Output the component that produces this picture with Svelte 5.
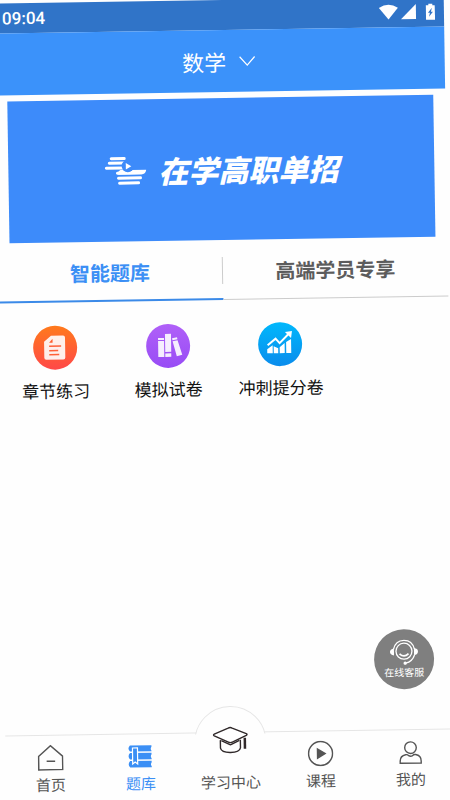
<script>
	let tab = $state(0)
	let page = $state("bank")

	const tabs = ["智能题库", "高端学员专享"]

	const items = [
		{ id: "chapter", name: "章节练习" },
		{ id: "mock", name: "模拟试卷" },
		{ id: "sprint", name: "冲刺提分卷" }
	]

	const nav = [
		{ id: "home", name: "首页" },
		{ id: "bank", name: "题库" },
		{ id: "study", name: "学习中心" },
		{ id: "course", name: "课程" },
		{ id: "mine", name: "我的" }
	]
</script>

<div class="phone">
	<div class="status">
		<span>09:04</span>
		<svg width="56" height="18" viewBox="0 0 56 18" fill="#fff">
			<path d="M0 4.500Q9.500-2 19 4.500L9.500 16z" />
			<path d="M37 1v15H22z" />
			<path d="M47 2.500h2.500V1h4v1.500H56V17h-9z" />
			<path d="M53 5l-4 5h2l-1 4 4-5h-2z" fill="#3074c8" />
		</svg>
	</div>

	<header>
		<button class="subject">
			数学
			<svg width="17" height="11" viewBox="0 0 17 11"><path d="M1 1l7.500 8.500L16 1" fill="none" stroke="#fff" stroke-width="1.200" /></svg>
		</button>
	</header>

	<main>
		<a class="banner" href="#banner">
			<svg width="42" height="29" viewBox="0 0 42 29" fill="none" stroke="#fff" stroke-width="3" stroke-linecap="round">
				<path d="M7 2h13M5 6.500h15M2 11.500h18" />
				<path d="M13 16.500h24M14 21.500h22M15 26.500h19" />
				<path d="M27 13.500h15q-1 4-4 4.500H14q-2-2 2-4.500z" fill="#fff" stroke="none" />
				<circle cx="23.500" cy="9.500" r="6.200" fill="#3d8bfa" stroke="none" />
				<path d="M21.500 6.500v6.500l5.500-3.200z" fill="#fff" stroke="none" />
			</svg>
			<strong>在学高职单招</strong>
		</a>

		<div class="tabs">
			{#each tabs as name, i}
				<button class:active={tab === i} onclick={() => (tab = i)}><span>{name}</span></button>
			{/each}
		</div>

		<div class="grid">
			{#each items as item}
				<a href="#{item.id}">
					<i class={item.id}>
						{#if item.id === "chapter"}
							<svg width="44" height="44" viewBox="0 0 44 44">
								<path d="M18 10h12q2 0 2 2v20q0 2-2 2H13q-2 0-2-2V16z" fill="#fff" opacity=".9" />
								<path d="M16 17h3.500v-4z" fill="#ff6130" />
								<path d="M16 20.500h12M16 25h9M16 29h10" stroke="#ff6038" stroke-width="1.500" />
							</svg>
						{:else if item.id === "mock"}
							<svg width="44" height="44" viewBox="0 0 44 44" fill="#fff" opacity=".9">
								<path d="M12 14h6v2h-6zM12 17h6v16h-6zM19 10h6v18h-6zM19 29.500h6V33h-6zM26 14.500l5-1 .4 2-5 1zM26.500 17.500l5-1L36 31l-5.500 1.500z" />
							</svg>
						{:else}
							<svg width="44" height="44" viewBox="0 0 44 44">
								<path d="M9 27l5.500-4v8H9zM15.500 24l4.500 2v5h-4.500zM21.500 25l5-4v10h-5zM28 20l5-3v14h-5z" fill="#fff" />
								<path d="M9.500 23l8-6.500 4 4.500 9-9" fill="none" stroke="#fff" stroke-width="2" />
								<path d="M27 10l7-1-1 7z" fill="#fff" />
							</svg>
						{/if}
					</i>
					{item.name}
				</a>
			{/each}
		</div>
	</main>

	<button class="service">
		<svg width="30" height="26" viewBox="0 0 30 26" fill="none" stroke="#fff" stroke-width="1.300">
			<circle cx="15" cy="12" r="8" />
			<path d="M4.500 10C6 4 10 1.200 15 1.200S24 4 25.500 10M25.500 16c-1.500 4.500-4.500 7-9 8" />
			<path d="M5 9v7q-4-.5-4-3.500T5 9zM25 9v7q4-.5 4-3.500T25 9z" fill="#fff" stroke="none" />
			<path d="M10.500 14.500q4.500 4.500 9 0" stroke-width="1.700" />
			<circle cx="16" cy="24" r="1" fill="#fff" />
		</svg>
		在线客服
	</button>

	<nav>
		{#each nav as item}
			<a href="#{item.id}" class={item.id} class:active={page === item.id} onclick={() => (page = item.id)}>
				{#if item.id === "home"}
					<svg width="26" height="26" viewBox="0 0 26 26" fill="none" stroke="currentColor" stroke-width="1.500">
						<path d="M1 11.500L13 1l12 10.500V25H1zM9 16.500h8.500" />
					</svg>
				{:else if item.id === "bank"}
					<svg width="26" height="26" viewBox="0 0 26 26" fill="currentColor">
						<path d="M2.500 2H24v1.500q-1.500 2 0 4V8H2.500q-3-3 0-6zM2.500 9.500H24V11q-1.500 2 0 4v1H2.500q-3-3.500 0-6.500zM2.500 17.500H24V19q-1.500 2 0 4v1H2.500q-3-3 0-6.500z" />
						<path d="M5 4.500h5v16l-2.500-2-2.500 2z" stroke="#fff" stroke-width="1.200" />
					</svg>
				{:else if item.id === "study"}
					<svg width="36" height="28" viewBox="0 0 36 28" fill="none" stroke="#30292a" stroke-width="1.400" stroke-linejoin="round">
						<path d="M8 14v8q1 4.500 10 4.500T28 22v-8" />
						<path d="M18 1.500q1 0 2 .6L34 8q1.500.7 0 1.600L20 16.200q-2 1-4 0L2 9.600Q.5 8.700 2 8l14-5.900q1-.6 2-.6z" fill="#fff" />
						<path d="M9 14.500l8 4q1 .5 2 0l8-4" />
						<path d="M32.500 12v11" stroke-width="2.500" />
					</svg>
				{:else if item.id === "course"}
					<svg width="26" height="26" viewBox="0 0 26 26" fill="none" stroke="currentColor" stroke-width="1.500">
						<circle cx="13" cy="13" r="12" />
						<path d="M10 8.500v9l7.500-4.500z" fill="currentColor" />
					</svg>
				{:else}
					<svg width="26" height="26" viewBox="0 0 26 26" fill="none" stroke="currentColor" stroke-width="1.400">
						<circle cx="13" cy="8.500" r="5.800" />
						<path d="M2.500 24v-2q0-5.500 5.500-6.500 2-.3 3 1 2 1.200 4 0 1-1.300 3-1 5.500 1 5.500 6.500v2z" />
					</svg>
				{/if}
				<span>{item.name}</span>
			</a>
		{/each}
	</nav>
</div>

<style>
	:global(body) {
		background: #fefefe;
		overflow: hidden;
	}

	.phone {
		position: relative;
		display: flex;
		flex-direction: column;
		height: 100vh;
		background: #fefefe;
		font-family: "Noto Sans CJK SC", sans-serif;
		transform: rotate(-0.9deg);
	}

	button {
		border: 0;
		padding: 0;
		background: none;
		font-family: inherit;
		cursor: pointer;
	}

	a {
		color: inherit;
		text-decoration: none;
	}

	svg {
		display: block;
		flex: none;
	}

	.status {
		display: flex;
		align-items: center;
		justify-content: space-between;
		height: 30px;
		padding: 0 9px 0 8px;
		background: #3074c8;
		color: #fff;
		font: 500 17px Roboto, sans-serif;
	}

	header {
		display: flex;
		align-items: center;
		justify-content: center;
		height: 62px;
		background: #3b92fa;
	}

	.subject {
		display: flex;
		align-items: center;
		gap: 12px;
		padding-right: 2px;
		color: #fff;
		font-size: 22px;
		line-height: 30px;
	}

	.banner {
		display: flex;
		align-items: center;
		justify-content: center;
		gap: 12px;
		height: 142px;
		margin: 6px 12px 0;
		background: #3d8bfa;
		color: #fff;
	}

	.banner strong {
		font-size: 30px;
		font-weight: 900;
		font-style: italic;
		line-height: 38px;
	}

	.tabs {
		display: grid;
		grid-template-columns: 1fr 1fr;
	}

	.tabs button {
		height: 60px;
		padding: 17px 0 16px;
		border-bottom: 1px solid #ccc;
		color: #5c5c5c;
		font-size: 20px;
		font-weight: 700;
		line-height: 27px;
	}

	.tabs button.active {
		border-bottom: 2px solid #3b8ae8;
		color: #3b8ff5;
	}

	.tabs span {
		display: block;
	}

	.tabs button:first-child span {
		border-right: 1px solid #ccc;
	}

	.grid {
		display: grid;
		grid-template-columns: repeat(4, 1fr);
		padding-top: 23px;
	}

	.grid a {
		display: flex;
		flex-direction: column;
		align-items: center;
		gap: 9px;
		color: #111;
		font-size: 17px;
		line-height: 24px;
		white-space: nowrap;
	}

	.grid i {
		border-radius: 50%;
	}

	.grid .chapter {
		background: linear-gradient(#ff7a1c, #ff4848);
	}

	.grid .mock {
		background: linear-gradient(#b060f8, #984cf5);
	}

	.grid .sprint {
		background: linear-gradient(#00b8fc, #0a8cec);
	}

	/* floats over the page */
	.service {
		position: absolute;
		right: 20px;
		bottom: 108px;
		display: flex;
		flex-direction: column;
		align-items: center;
		justify-content: center;
		width: 60px;
		height: 60px;
		border-radius: 50%;
		background: #7f7f7f;
		color: #fff;
		font-size: 10px;
		line-height: 14px;
	}

	nav {
		position: relative;
		display: grid;
		grid-template-columns: repeat(5, 1fr);
		grid-template-rows: 100%;
		height: 68px;
		margin-top: auto;
		border-top: 1px solid #e6e6e6;
		box-sizing: border-box;
	}

	/* round bump behind the middle item */
	nav::before {
		content: "";
		position: absolute;
		top: -27px;
		left: calc(50% - 36px);
		width: 72px;
		height: 72px;
		border: 1px solid #e6e6e6;
		border-radius: 50%;
		background: #fefefe;
		box-sizing: border-box;
		clip-path: inset(0 0 44px 0);
	}

	nav a {
		position: relative;
		display: flex;
		flex-direction: column;
		align-items: center;
		justify-content: flex-end;
		gap: 4px;
		padding-bottom: 8px;
		color: #555;
		font-size: 15px;
		line-height: 20px;
	}

	nav a.active {
		color: #3b8ff5;
	}

	nav a.study {
		gap: 18px;
	}
</style>
